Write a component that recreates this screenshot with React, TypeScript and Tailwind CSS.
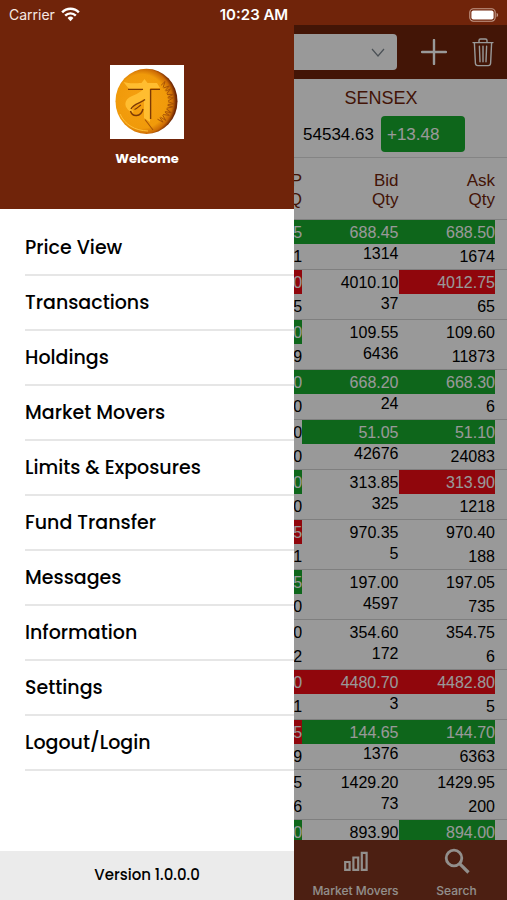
import React from "react";

type Tone = "up" | "down" | "flat";
type Quote = {
  ltp: [string, string, Tone];
  bid: [string, string, Tone];
  ask: [string, string, Tone];
};

const menu = [
  "Price View",
  "Transactions",
  "Holdings",
  "Market Movers",
  "Limits & Exposures",
  "Fund Transfer",
  "Messages",
  "Information",
  "Settings",
  "Logout/Login",
];

const quotes: Quote[] = [
  { ltp: ["5", "1", "up"], bid: ["688.45", "1314", "up"], ask: ["688.50", "1674", "up"] },
  { ltp: ["0", "5", "down"], bid: ["4010.10", "37", "flat"], ask: ["4012.75", "65", "down"] },
  { ltp: ["0", "9", "up"], bid: ["109.55", "6436", "flat"], ask: ["109.60", "11873", "flat"] },
  { ltp: ["0", "0", "up"], bid: ["668.20", "24", "up"], ask: ["668.30", "6", "up"] },
  { ltp: ["0", "0", "flat"], bid: ["51.05", "42676", "up"], ask: ["51.10", "24083", "up"] },
  { ltp: ["0", "0", "up"], bid: ["313.85", "325", "flat"], ask: ["313.90", "1218", "down"] },
  { ltp: ["5", "1", "down"], bid: ["970.35", "5", "flat"], ask: ["970.40", "188", "flat"] },
  { ltp: ["5", "0", "up"], bid: ["197.00", "4597", "flat"], ask: ["197.05", "735", "flat"] },
  { ltp: ["0", "2", "flat"], bid: ["354.60", "172", "flat"], ask: ["354.75", "6", "flat"] },
  { ltp: ["0", "1", "down"], bid: ["4480.70", "3", "down"], ask: ["4482.80", "5", "down"] },
  { ltp: ["5", "9", "down"], bid: ["144.65", "1376", "up"], ask: ["144.70", "6363", "up"] },
  { ltp: ["5", "6", "flat"], bid: ["1429.20", "73", "flat"], ask: ["1429.95", "200", "flat"] },
  { ltp: ["0", "", "up"], bid: ["893.90", "", "flat"], ask: ["894.00", "", "up"] },
];

const toneClass: Record<Tone, string> = {
  up: "bg-[#18aa2e] text-white",
  down: "bg-[#f00a14] text-white",
  flat: "text-black",
};

function StatusBar() {
  return (
    <div className="grid h-[25px] shrink-0 grid-cols-3 items-center bg-[#70240a] pt-1 pr-2 pl-[9px] font-[Inter,sans-serif] text-[14px] leading-5 text-[#f6e9e4]">
      <div className="flex items-center gap-[6px]">
        <span>Carrier</span>
        <svg viewBox="0 0 20 15" className="h-[15px] w-[19px]" fill="none" stroke="#fff" strokeWidth="2.6" aria-hidden="true">
          <path d="M1.2 5.2a12.4 12.4 0 0 1 17.6 0" />
          <path d="M4.4 8.6a8 8 0 0 1 11.2 0" />
          <path d="M10 14.6 6.9 11.2a4.4 4.4 0 0 1 6.2 0z" fill="#fff" stroke="none" />
        </svg>
      </div>
      <span className="text-center text-[15px] font-semibold whitespace-nowrap text-white">10:23 AM</span>
      <svg viewBox="0 0 30 14" className="h-[14px] w-[30px] justify-self-end" fill="none" aria-hidden="true">
        <rect x="0.8" y="0.8" width="25.4" height="12.4" rx="3.6" stroke="#c39b8b" strokeWidth="1.1" />
        <rect x="2.4" y="2.4" width="22.2" height="9.2" rx="2" fill="#fff" />
        <path d="M27.6 4.8c2 .8 2 3.6 0 4.4z" fill="#c39b8b" />
      </svg>
    </div>
  );
}

function CoinLogo() {
  const ticks = [-44, -34, -24, -14, -4, 6, 16, 26, 36, 46, 56];
  return (
    <svg viewBox="0 0 74 74" className="size-[74px] bg-white" role="img" aria-label="Logo">
      <defs>
        <radialGradient id="coin" cx="0.42" cy="0.5" r="0.56">
          <stop offset="0" stopColor="#f6a011" />
          <stop offset="0.74" stopColor="#f09a0a" />
          <stop offset="0.9" stopColor="#cd6c05" />
          <stop offset="1" stopColor="#6f2604" />
        </radialGradient>
      </defs>
      <ellipse cx="36.5" cy="36.3" rx="31" ry="32.6" fill="url(#coin)" />
      <path d="M10 49C15 60 25 65.500 38 66" fill="none" stroke="#ffbf3c" strokeWidth="1" />
      <g fill="none" stroke="#a65207" strokeWidth="0.9">
        {ticks.map((angle, i) => (
          <path key={angle} d={i % 2 ? "M21 -1.500l6 1.500-6 1.500" : "M21 -1.500h5.500M21 1.500l5.500-3"} transform={`translate(37 36) rotate(${angle})`} />
        ))}
      </g>
      <path d="M35 54.500 43 65" stroke="#a45206" strokeWidth="1.1" />
      <path d="M13.500 17C20 19 27 18 31.500 18L34.500 14 37.500 18H47L50 23H40V57L34 53V34C30 35 30 39 26 40.500 21 42 22 46 24 47L21.500 47.500C16 44 13.500 39 17 34.500 20 30.500 28 30 33.500 24H19z" fill="#ffbd30" />
      <g fill="none" stroke="#7d3a05">
        <path d="M18 24.400H33M40.600 24.400H50" strokeWidth="1.3" />
        <path d="M40.600 24V54" strokeWidth="1.4" />
        <path d="M21 44C23 39 31 38 35 34.500M20.500 46C22 52 31 52.500 33 44" strokeWidth="1.4" />
        <path d="M24.500 44.500c3-1 4-3 6.500-4.500" strokeWidth="1.1" />
      </g>
    </svg>
  );
}

function Drawer() {
  return (
    <aside className="flex w-[58%] shrink-0 flex-col bg-white font-[Poppins,Inter,sans-serif] text-black">
      <div className="flex h-[184px] shrink-0 flex-col items-center gap-[10px] bg-[#70240a] pt-10">
        <CoinLogo />
        <p className="text-[13px] leading-5 font-bold text-white">Welcome</p>
      </div>
      <nav className="flex-1 pt-3 pl-[25px]">
        <ul>
          {menu.map((label) => (
            <li key={label} className="border-b-2 border-[#e6e6e6]">
              <button type="button" className="block h-[53px] w-full text-left text-[19px] leading-6 font-medium">
                {label}
              </button>
            </li>
          ))}
        </ul>
      </nav>
      <footer className="flex h-[49px] shrink-0 items-center justify-center bg-[#ebebeb] text-[15px] font-medium">
        Version 1.0.0.0
      </footer>
    </aside>
  );
}

function Toolbar() {
  return (
    <div className="flex h-[54px] shrink-0 items-center bg-[#70240a] pr-3">
      <div className="relative w-[103px]">
        <select aria-label="Watchlist" className="block h-9 w-full appearance-none rounded-r-[4px] bg-white">
          <option />
        </select>
        <svg viewBox="0 0 14 10" className="pointer-events-none absolute top-[14px] right-3 h-[10px] w-[14px]" fill="none" stroke="#7d8790" strokeWidth="1.2" aria-hidden="true">
          <path d="M1 1l6 7 6-7" />
        </svg>
      </div>
      <button type="button" aria-label="Add" className="ml-auto">
        <svg viewBox="0 0 26 26" className="size-[26px]" stroke="#fff" strokeWidth="2.4" strokeLinecap="round" aria-hidden="true">
          <path d="M13 1v24M1 13h24" />
        </svg>
      </button>
      <button type="button" aria-label="Delete" className="ml-6">
        <svg viewBox="0 0 24 30" className="h-[30px] w-6" fill="none" stroke="#fff" strokeWidth="1.4" strokeLinecap="round" aria-hidden="true">
          <path d="M2 5.6h20M8 5.2V3.4Q8 2 9.6 2h4.8Q16 2 16 3.4v1.8M3.400 6l1 20.200Q4.600 28.600 6.800 28.600h10.400q2.200 0 2.400-2.400L20.600 6M8.400 9.200l.6 15.600M12 9.200v15.600M15.600 9.200l-.6 15.600" />
        </svg>
      </button>
    </div>
  );
}

function Cell({ value, low }: { value: [string, string, Tone]; low: boolean }) {
  return (
    <td className="p-0 align-top">
      <div className={"flex h-6 justify-end overflow-hidden text-right leading-[25px] " + toneClass[value[2]]}>{value[0]}</div>
      <div className={"flex h-[25px] justify-end overflow-hidden text-black " + (low ? "leading-[25px]" : "leading-5")}>{value[1]}</div>
    </td>
  );
}

function Board() {
  return (
    <main className="relative flex min-w-0 flex-1 flex-col overflow-hidden bg-white font-['Liberation_Sans',Arial,sans-serif]">
      <Toolbar />
      <section className="h-[79px] shrink-0 border-b border-[#dcdcdc] pt-[7px] pl-[9px] text-[17px]">
        <h2 className="w-[156px] text-center text-[18px] leading-6 text-[#70240a]">SENSEX</h2>
        <div className="mt-[6px] flex gap-[7px] leading-[38px]">
          <span>54534.63</span>
          <span className="h-9 w-[84px] rounded-[4px] bg-[#18aa2e] pl-[6px] text-white">+13.48</span>
        </div>
      </section>
      <div className="h-0 flex-1 overflow-hidden">
        <table className="w-full table-fixed border-collapse text-right text-[16px]">
          <colgroup>
            <col className="w-2" />
            <col />
            <col />
            <col className="w-3" />
          </colgroup>
          <thead>
            <tr className="h-[61px] align-top text-[17px] leading-[19px] text-[#70240a]">
              <th className="p-0 pt-[13px] font-normal">
                <div className="flex flex-col items-end overflow-hidden"><span>P</span><span>Q</span></div>
              </th>
              <th className="p-0 pt-[13px] font-normal">Bid<br />Qty</th>
              <th className="p-0 pt-[13px] font-normal">Ask<br />Qty</th>
              <td />
            </tr>
          </thead>
          <tbody>
            {quotes.map((q) => (
              <tr key={q.bid[0]} className="h-[50px] border-t border-[#d4d4d4]">
                <Cell value={q.ltp} low />
                <Cell value={q.bid} low={false} />
                <Cell value={q.ask} low />
                <td />
              </tr>
            ))}
          </tbody>
        </table>
      </div>
      <nav className="flex h-[60px] shrink-0 justify-end bg-[#7f351e] font-[Inter,sans-serif] text-[12px] leading-4 font-medium text-[#f4eeea]">
        <button type="button" className="flex w-[101px] flex-col items-center justify-between pt-[11px] pb-px whitespace-nowrap">
          <svg viewBox="0 0 24 20" className="h-5 w-6" fill="none" stroke="currentColor" strokeWidth="2.2" aria-hidden="true">
            <path d="M1.200 11h4.400v7.800H1.200zM9.400 6.500h4.800v12.300H9.400zM17.800 1.800h4.800v17h-4.800z" />
          </svg>
          Market Movers
        </button>
        <button type="button" className="flex w-[101px] flex-col items-center justify-between pt-2 pb-px">
          <svg viewBox="0 0 26 26" className="size-[26px]" fill="none" stroke="currentColor" strokeWidth="2.8" aria-hidden="true">
            <circle cx="10" cy="10" r="7.800" />
            <path d="M15.600 15.600 24.500 24.500" strokeWidth="3.200" />
          </svg>
          Search
        </button>
      </nav>
      {/* Dim layer shown while the drawer is open */}
      <div className="absolute inset-0 bg-black/40" />
    </main>
  );
}

export default function App() {
  return (
    <div className="flex h-screen min-h-[640px] flex-col overflow-hidden">
      <StatusBar />
      <div className="flex min-h-0 flex-1">
        <Drawer />
        <Board />
      </div>
    </div>
  );
}
